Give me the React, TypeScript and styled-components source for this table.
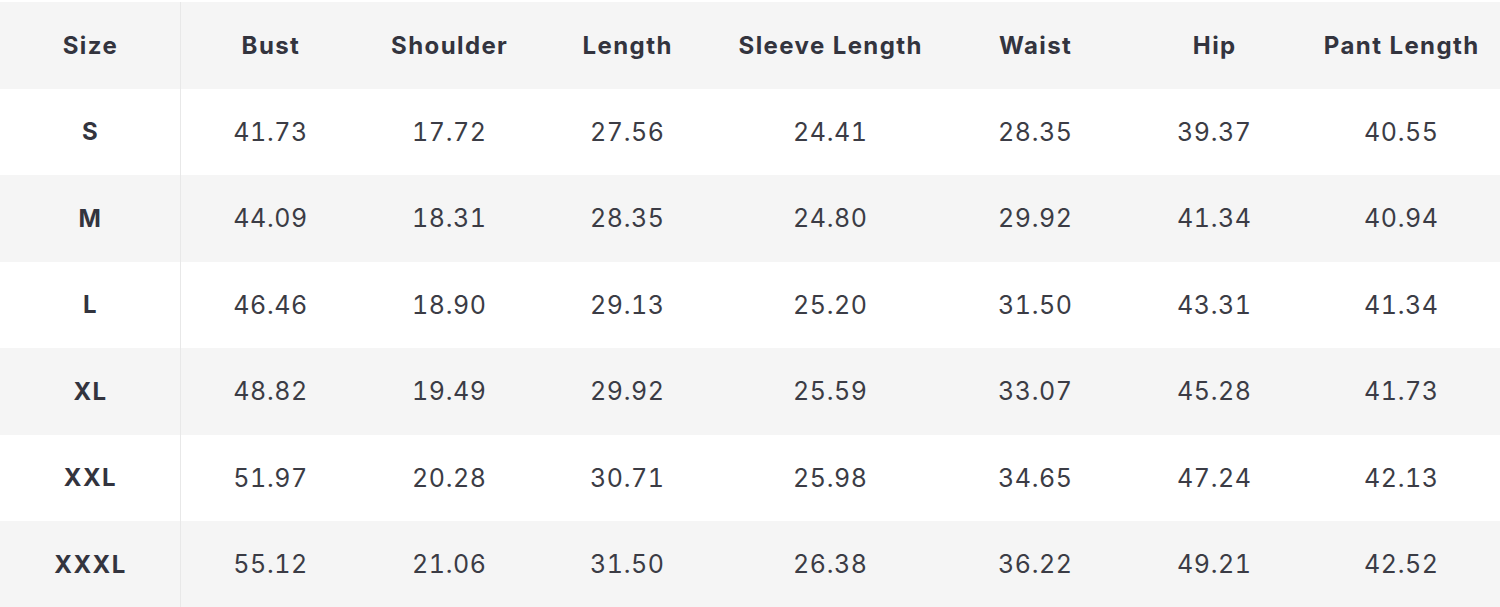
import React from "react";
import styled, { createGlobalStyle } from "styled-components";

const Global = createGlobalStyle`
  html, body { margin: 0; padding: 0; background: #ffffff; }
  body { font-family: Inter, "Noto Sans", sans-serif; }
`;

const Wrap = styled.div`
  padding-top: 2px;
  width: 1500px;
`;

const Table = styled.table`
  width: 1500px;
  border-collapse: collapse;
  table-layout: fixed;
`;

const Row = styled.tr<{ $shade: boolean }>`
  height: 86.5px;
  background: ${(p) => (p.$shade ? "#f5f5f5" : "#ffffff")};
`;

const Head = styled.th<{ $first?: boolean }>`
  padding: 0 0 0 1.4px;
  text-align: center;
  font-size: 24px;
  font-weight: 700;
  color: #33343e;
  letter-spacing: 1.4px;
  border-right: ${(p) => (p.$first ? "1px solid #e8e8e8" : "none")};
`;

const SizeCell = styled.td`
  padding: 0 0 0 1.4px;
  text-align: center;
  font-size: 24px;
  font-weight: 700;
  color: #33343e;
  letter-spacing: 1.4px;
  border-right: 1px solid #e8e8e8;
`;

const Cell = styled.td`
  padding: 0 0 0 0.6px;
  text-align: center;
  font-size: 25px;
  font-weight: 400;
  color: #3b3c45;
  letter-spacing: 0.6px;
  font-variant-numeric: tabular-nums;
`;

const columns = [
  { name: "Size", w: 180 },
  { name: "Bust", w: 180 },
  { name: "Shoulder", w: 178 },
  { name: "Length", w: 178 },
  { name: "Sleeve Length", w: 228 },
  { name: "Waist", w: 182 },
  { name: "Hip", w: 176 },
  { name: "Pant Length", w: 198 },
];

const data: [string, string[]][] = [
  ["S", ["41.73", "17.72", "27.56", "24.41", "28.35", "39.37", "40.55"]],
  ["M", ["44.09", "18.31", "28.35", "24.80", "29.92", "41.34", "40.94"]],
  ["L", ["46.46", "18.90", "29.13", "25.20", "31.50", "43.31", "41.34"]],
  ["XL", ["48.82", "19.49", "29.92", "25.59", "33.07", "45.28", "41.73"]],
  ["XXL", ["51.97", "20.28", "30.71", "25.98", "34.65", "47.24", "42.13"]],
  ["XXXL", ["55.12", "21.06", "31.50", "26.38", "36.22", "49.21", "42.52"]],
];

export default function App() {
  return (
    <>
      <Global />
      <Wrap>
        <Table>
          <colgroup>
            {columns.map((c) => (
              <col key={c.name} style={{ width: c.w }} />
            ))}
          </colgroup>
          <thead>
            <Row $shade>
              {columns.map((c, i) => (
                <Head key={c.name} $first={i === 0}>
                  {c.name}
                </Head>
              ))}
            </Row>
          </thead>
          <tbody>
            {data.map(([size, vals], i) => (
              <Row key={size} $shade={i % 2 === 1}>
                <SizeCell>{size}</SizeCell>
                {vals.map((v, j) => (
                  <Cell key={j}>{v}</Cell>
                ))}
              </Row>
            ))}
          </tbody>
        </Table>
      </Wrap>
    </>
  );
}
